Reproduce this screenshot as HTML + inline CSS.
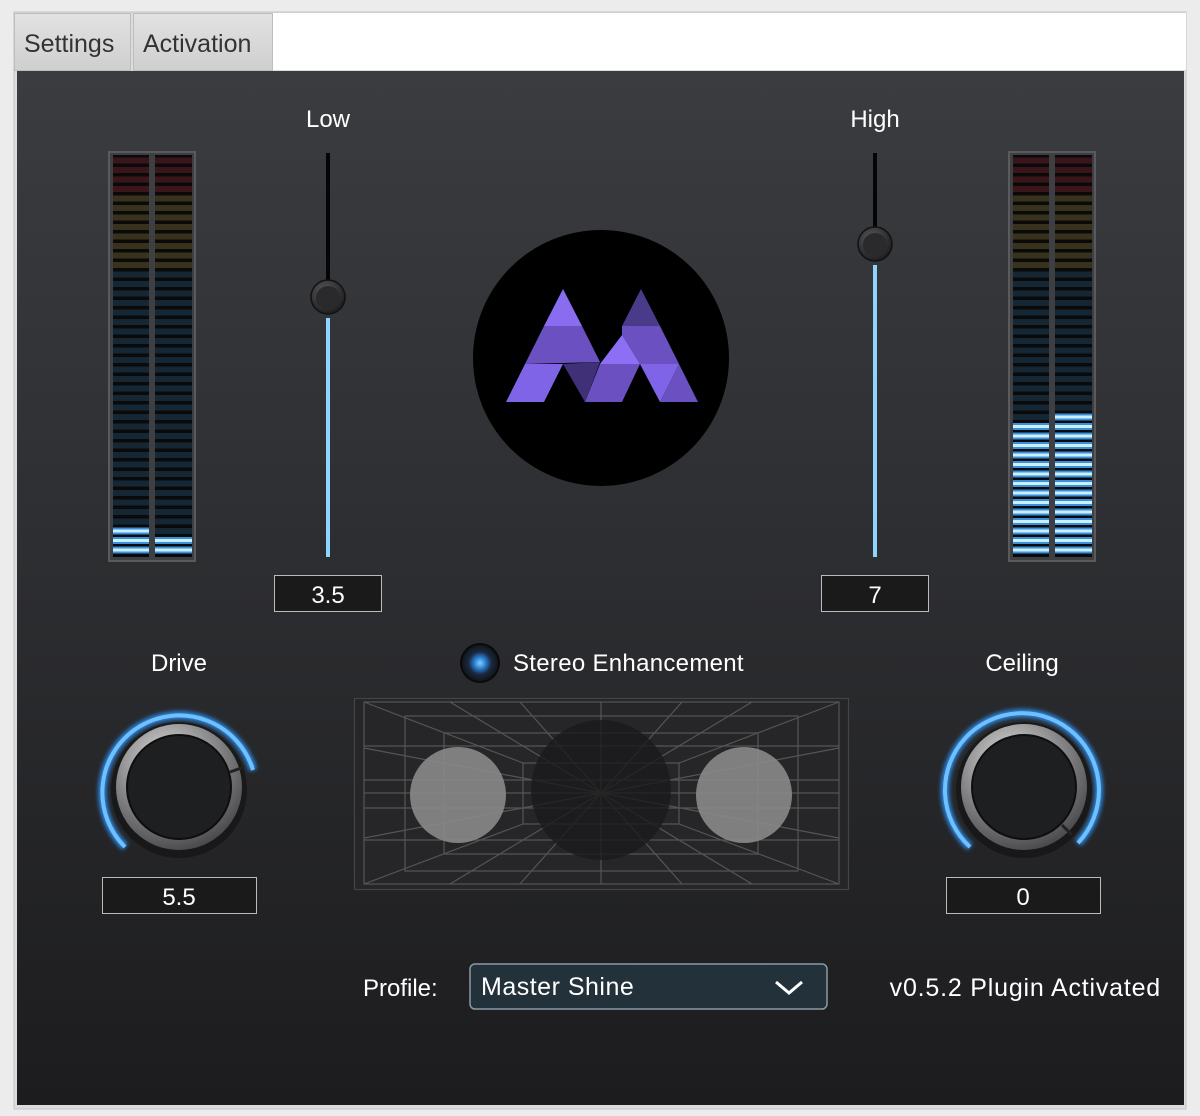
<!DOCTYPE html>
<html><head><meta charset="utf-8"><style>
html,body{margin:0;padding:0;background:#ececec;width:1200px;height:1116px;overflow:hidden;font-family:"Liberation Sans",sans-serif}
</style></head><body>
<svg width="1200" height="1116" viewBox="0 0 1200 1116" xmlns="http://www.w3.org/2000/svg" font-family="Liberation Sans, sans-serif">
<defs>
<linearGradient id="bg" x1="0" y1="0" x2="0" y2="1"><stop offset="0" stop-color="#3a3c40"/><stop offset="0.5" stop-color="#2c2d30"/><stop offset="1" stop-color="#1c1c1e"/></linearGradient>
<linearGradient id="tab" x1="0" y1="0" x2="0" y2="1"><stop offset="0" stop-color="#e2e2e2"/><stop offset="1" stop-color="#cfcfcf"/></linearGradient>
<pattern id="pr" x="0" y="156" width="40" height="9.5" patternUnits="userSpaceOnUse"><rect x="0" y="1.5" width="40" height="6" fill="#3a161a"/></pattern>
<pattern id="py" x="0" y="156" width="40" height="9.5" patternUnits="userSpaceOnUse"><rect x="0" y="1.5" width="40" height="6" fill="#38321c"/></pattern>
<pattern id="pb" x="0" y="156" width="40" height="9.5" patternUnits="userSpaceOnUse"><rect x="0" y="1.5" width="40" height="6" fill="#152634"/></pattern>
<pattern id="pl" x="0" y="156" width="40" height="9.5" patternUnits="userSpaceOnUse"><rect x="0" y="1" width="40" height="7" fill="#3a8fd8"/><rect x="0" y="3" width="40" height="3" fill="#c8f0ff"/></pattern>
<radialGradient id="knob" cx="0.4" cy="0.3" r="0.8"><stop offset="0" stop-color="#e0e0e0"/><stop offset="0.5" stop-color="#8a8a8c"/><stop offset="1" stop-color="#3a3a3c"/></radialGradient>
<radialGradient id="sk" cx="0.4" cy="0.35" r="0.7"><stop offset="0" stop-color="#5a5a5e"/><stop offset="1" stop-color="#1a1a1c"/></radialGradient>
<radialGradient id="led" cx="0.5" cy="0.5" r="0.5"><stop offset="0" stop-color="#7fd0ff"/><stop offset="0.3" stop-color="#2a7fd0"/><stop offset="0.6" stop-color="#1a2a40"/><stop offset="1" stop-color="#101216"/></radialGradient>
<filter id="glow"><feGaussianBlur stdDeviation="2"/></filter>
</defs>

<rect x="14" y="12" width="1172" height="1097" fill="#dcdcdc" stroke="#c4c4c4"/>
<rect x="273" y="13" width="913" height="57" fill="#fff"/>
<rect x="14.5" y="13.5" width="116" height="57" fill="url(#tab)" stroke="#bdbdbd"/>
<rect x="133.5" y="13.5" width="139" height="57" fill="url(#tab)" stroke="#bdbdbd"/>
<text x="24" y="52" font-size="25" fill="#333">Settings</text>
<text x="143" y="52" font-size="25" fill="#333">Activation</text>
<rect x="17" y="71" width="1167" height="1034" fill="url(#bg)"/>

<g>
<rect x="109" y="152" width="86" height="409" fill="#3e3f42" stroke="#5a5a5c" stroke-width="2"/>
<rect x="113" y="155" width="36" height="402" fill="#0a0a0b"/>
<rect x="155" y="155" width="37" height="402" fill="#0a0a0b"/>
<rect x="113" y="156" width="36" height="38" fill="url(#pr)"/><rect x="155" y="156" width="37" height="38" fill="url(#pr)"/>
<rect x="113" y="194" width="36" height="76" fill="url(#py)"/><rect x="155" y="194" width="37" height="76" fill="url(#py)"/>
<rect x="113" y="270" width="36" height="286" fill="url(#pb)"/><rect x="155" y="270" width="37" height="286" fill="url(#pb)"/>
<rect x="113" y="527" width="36" height="29" fill="url(#pl)"/><rect x="155" y="536.5" width="37" height="19" fill="url(#pl)"/>
</g>
<g>
<rect x="1009" y="152" width="86" height="409" fill="#3e3f42" stroke="#5a5a5c" stroke-width="2"/>
<rect x="1013" y="155" width="36" height="402" fill="#0a0a0b"/>
<rect x="1055" y="155" width="37" height="402" fill="#0a0a0b"/>
<rect x="1013" y="156" width="36" height="38" fill="url(#pr)"/><rect x="1055" y="156" width="37" height="38" fill="url(#pr)"/>
<rect x="1013" y="194" width="36" height="76" fill="url(#py)"/><rect x="1055" y="194" width="37" height="76" fill="url(#py)"/>
<rect x="1013" y="270" width="36" height="286" fill="url(#pb)"/><rect x="1055" y="270" width="37" height="286" fill="url(#pb)"/>
<rect x="1013" y="421.5" width="36" height="134" fill="url(#pl)"/><rect x="1055" y="412" width="37" height="144" fill="url(#pl)"/>
</g>

<text x="328" y="127" font-size="24" fill="#fff" text-anchor="middle">Low</text>
<line x1="328" y1="153" x2="328" y2="300" stroke="#050505" stroke-width="4"/>
<line x1="328" y1="318" x2="328" y2="557" stroke="#3a9ae8" stroke-width="8" filter="url(#glow)"/>
<line x1="328" y1="318" x2="328" y2="557" stroke="#8fd4ff" stroke-width="4"/>
<circle cx="328" cy="297" r="17" fill="url(#sk)" stroke="#111" stroke-width="1.5"/>
<circle cx="328" cy="298" r="12" fill="#2a2a2c"/>
<rect x="274.5" y="575.5" width="107" height="36" fill="#1a1a1b" stroke="#bbb"/>
<text x="328" y="603" font-size="24" fill="#fff" text-anchor="middle">3.5</text>

<text x="875" y="127" font-size="24" fill="#fff" text-anchor="middle">High</text>
<line x1="875" y1="153" x2="875" y2="247" stroke="#050505" stroke-width="4"/>
<line x1="875" y1="265" x2="875" y2="557" stroke="#3a9ae8" stroke-width="8" filter="url(#glow)"/>
<line x1="875" y1="265" x2="875" y2="557" stroke="#8fd4ff" stroke-width="4"/>
<circle cx="875" cy="244" r="17" fill="url(#sk)" stroke="#111" stroke-width="1.5"/>
<circle cx="875" cy="245" r="12" fill="#2a2a2c"/>
<rect x="821.5" y="575.5" width="107" height="36" fill="#1a1a1b" stroke="#bbb"/>
<text x="875" y="603" font-size="24" fill="#fff" text-anchor="middle">7</text>

<circle cx="601" cy="358" r="128" fill="#000"/>
<g>
<polygon points="563,289 582,326 544,326" fill="#8a6cf0"/>
<polygon points="544,326 582,326 600,362 525,364" fill="#6a50c0"/>
<polygon points="525,364 563,364 544,402 506,402" fill="#8064e8"/>
<polygon points="563,364 600,362 585,402" fill="#3f3078"/>
<polygon points="641,289 660,326 622,326" fill="#4a3a8a"/>
<polygon points="622,326 660,326 679,364 640,364 622,335" fill="#6a50c0"/>
<polygon points="622,335 640,364 600,364" fill="#8c6ff5"/>
<polygon points="600,364 640,364 622,402 585,402" fill="#6a50c0"/>
<polygon points="640,364 679,364 660,402" fill="#8064e8"/>
<polygon points="679,364 698,402 660,402" fill="#6a50c0"/>
</g>

<text x="179" y="671" font-size="24" fill="#fff" text-anchor="middle">Drive</text>
<path d="M125 847 A77 77 0 1 1 253 770" fill="none" stroke="#2a8ae8" stroke-width="8" filter="url(#glow)"/>
<path d="M125 847 A77 77 0 1 1 253 770" fill="none" stroke="#6ec0ff" stroke-width="4"/>
<circle cx="179" cy="790" r="68" fill="#111" opacity="0.6"/>
<circle cx="179" cy="787" r="63" fill="url(#knob)"/>
<circle cx="179" cy="787" r="52" fill="#1e1f21" stroke="#0e0e0e" stroke-width="2"/>
<line x1="230" y1="772" x2="244" y2="767" stroke="#222" stroke-width="3"/>
<rect x="102.5" y="877.5" width="154" height="36" fill="#1a1a1b" stroke="#bbb"/>
<text x="179" y="905" font-size="24" fill="#fff" text-anchor="middle">5.5</text>

<text x="1022" y="671" font-size="24" fill="#fff" text-anchor="middle">Ceiling</text>
<path d="M970 847 A77 77 0 1 1 1078 843" fill="none" stroke="#2a8ae8" stroke-width="8" filter="url(#glow)"/>
<path d="M970 847 A77 77 0 1 1 1078 843" fill="none" stroke="#6ec0ff" stroke-width="4"/>
<circle cx="1024" cy="790" r="68" fill="#111" opacity="0.6"/>
<circle cx="1024" cy="787" r="63" fill="url(#knob)"/>
<circle cx="1024" cy="787" r="52" fill="#1e1f21" stroke="#0e0e0e" stroke-width="2"/>
<line x1="1062" y1="825" x2="1072" y2="835" stroke="#222" stroke-width="3"/>
<rect x="946.5" y="877.5" width="154" height="36" fill="#1a1a1b" stroke="#bbb"/>
<text x="1023" y="905" font-size="24" fill="#fff" text-anchor="middle">0</text>

<circle cx="480" cy="663" r="19" fill="url(#led)" stroke="#0a0a0a" stroke-width="2"/>
<text x="513" y="671" font-size="24" fill="#fff" letter-spacing="0.3">Stereo Enhancement</text>
<g stroke="#555" stroke-width="1.2" fill="none">
<rect x="354.5" y="698.5" width="494" height="191" fill="#262628" stroke="#444"/>
<rect x="364" y="702" width="475" height="182"/>
<rect x="405" y="716" width="393" height="155"/>
<rect x="444" y="733" width="314" height="121"/>
<rect x="523" y="763" width="156" height="61"/>
<line x1="364" y1="702" x2="523" y2="763"/><line x1="839" y1="702" x2="679" y2="763"/>
<line x1="364" y1="884" x2="523" y2="824"/><line x1="839" y1="884" x2="679" y2="824"/>
<line x1="364" y1="793" x2="839" y2="793"/><line x1="601" y1="702" x2="601" y2="884"/>
<line x1="364" y1="748" x2="839" y2="838"/><line x1="364" y1="838" x2="839" y2="748"/>
<line x1="450" y1="702" x2="752" y2="884"/><line x1="752" y1="702" x2="450" y2="884"/>
<line x1="520" y1="702" x2="682" y2="884"/><line x1="682" y1="702" x2="520" y2="884"/>
<line x1="364" y1="780" x2="839" y2="780"/><line x1="364" y1="808" x2="839" y2="808"/>
<line x1="364" y1="746" x2="839" y2="746"/><line x1="364" y1="840" x2="839" y2="840"/>
</g>
<circle cx="601" cy="790" r="70" fill="#1a1a1b" opacity="0.8"/>
<circle cx="458" cy="795" r="48" fill="#8a8a8a" opacity="0.9"/>
<circle cx="744" cy="795" r="48" fill="#8a8a8a" opacity="0.9"/>

<text x="363" y="996" font-size="24" fill="#fff">Profile:</text>
<rect x="470" y="964" width="357" height="45" rx="5" fill="#23313a" stroke="#8a9aa2" stroke-width="1.5"/>
<text x="481" y="995" font-size="25" fill="#fff" letter-spacing="0.5">Master Shine</text>
<path d="M776 982 L789 993 L802 982" fill="none" stroke="#fff" stroke-width="3"/>
<text x="1161" y="996" font-size="25" fill="#fff" text-anchor="end" letter-spacing="0.8">v0.5.2 Plugin Activated</text>
</svg>
</body></html>
